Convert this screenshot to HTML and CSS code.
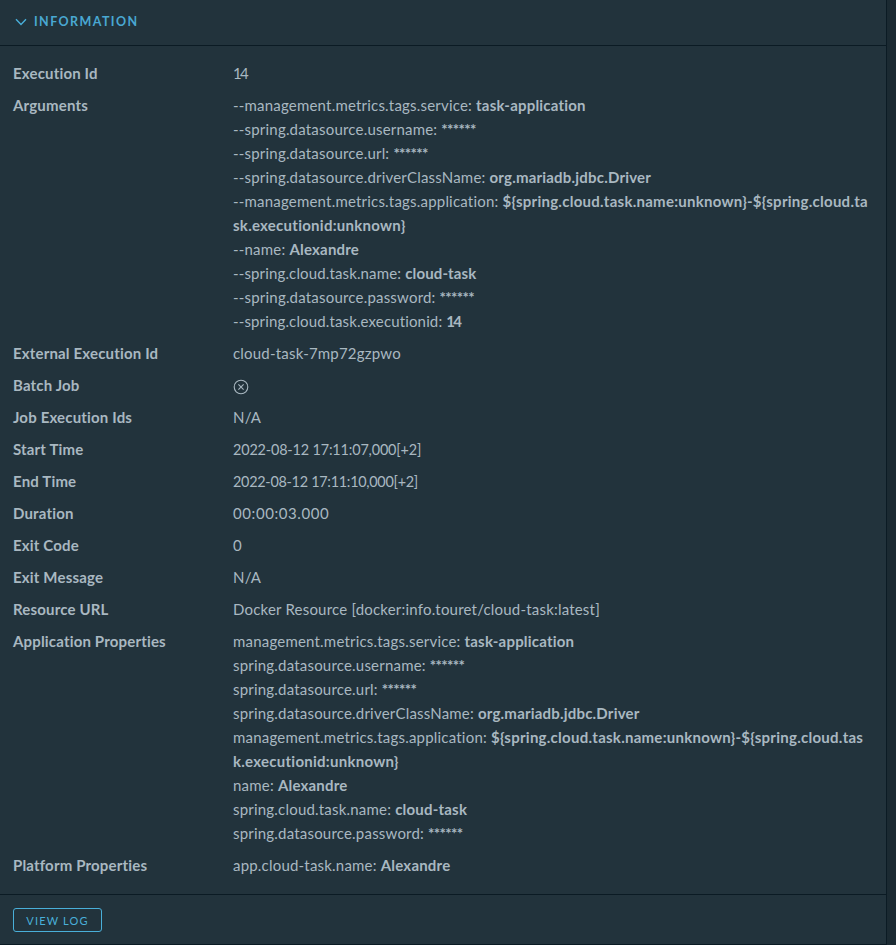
FILE: index.html
```html
<!DOCTYPE html>
<html lang="en">
<head>
<meta charset="utf-8">
<title>Task execution</title>
<link rel="stylesheet" href="styles.css">
</head>
<body>
<main class="card">
  <header class="card-header">
    <svg class="caret" viewBox="0 0 12 8" width="12" height="8"><path d="M1 1.2 6 6.4 11 1.2"/></svg>
    <h1>INFORMATION</h1>
  </header>
  <dl class="details">
    <dt>Execution Id</dt><dd class="count">14</dd>
    <dt>Arguments</dt>
    <dd>
      <div>--management.metrics.tags.service: <b>task-application</b></div>
      <div>--spring.datasource.username: <span class="mask">******</span></div>
      <div>--spring.datasource.url: <span class="mask">******</span></div>
      <div>--spring.datasource.driverClassName: <b>org.mariadb.jdbc.Driver</b></div>
      <div>--management.metrics.tags.application: <b class="long">${spring.cloud.task.name:unknown}-${spring.cloud.ta<br>sk.executionid:unknown}</b></div>
      <div>--name: <b>Alexandre</b></div>
      <div class="tight">--spring.cloud.task.name: <b>cloud-task</b></div>
      <div>--spring.datasource.password: <span class="mask">******</span></div>
      <div class="tight">--spring.cloud.task.executionid: <b class="count">14</b></div>
    </dd>
    <dt>External Execution Id</dt><dd>cloud-task-7mp72gzpwo</dd>
    <dt>Batch Job</dt>
    <dd class="status"><svg viewBox="0 0 16 16" width="16" height="16"><circle cx="8" cy="8" r="6.8"/><path d="m5.4 5.4 5.2 5.2m0-5.2-5.2 5.2"/></svg></dd>
    <dt>Job Execution Ids</dt><dd>N/A</dd>
    <dt>Start Time</dt><dd class="time">2022-08-12 17:11:07,000[+2]</dd>
    <dt>End Time</dt><dd class="time end">2022-08-12 17:11:10,000[+2]</dd>
    <dt>Duration</dt><dd class="duration">00:00:03.000</dd>
    <dt>Exit Code</dt><dd>0</dd>
    <dt>Exit Message</dt><dd>N/A</dd>
    <dt>Resource URL</dt><dd>Docker Resource [docker:info.touret/cloud-task:latest]</dd>
    <dt>Application Properties</dt>
    <dd>
      <div>management.metrics.tags.service: <b>task-application</b></div>
      <div>spring.datasource.username: <span class="mask">******</span></div>
      <div>spring.datasource.url: <span class="mask">******</span></div>
      <div>spring.datasource.driverClassName: <b>org.mariadb.jdbc.Driver</b></div>
      <div>management.metrics.tags.application: <b class="long">${spring.cloud.task.name:unknown}-${spring.cloud.tas<br>k.executionid:unknown}</b></div>
      <div>name: <b>Alexandre</b></div>
      <div>spring.cloud.task.name: <b>cloud-task</b></div>
      <div>spring.datasource.password: <span class="mask">******</span></div>
    </dd>
    <dt>Platform Properties</dt><dd>app.cloud-task.name: <b>Alexandre</b></dd>
  </dl>
  <footer class="card-footer"><button type="button">VIEW LOG</button></footer>
</main>
</body>
</html>
```
FILE: styles.css
```css
* { box-sizing: border-box; }
body {
  margin: 0;
  height: 945px;
  overflow: hidden;
  background: #1b2a32;
  color: #a9b8c1;
  font: 15px/24px Lato, "Liberation Sans", sans-serif;
}
.card {
  width: 887px;
  height: 945px;
  background: #22333c;
  border-right: 1px solid #0b1b24;
  border-bottom: 1px solid #0b1b24;
}
.card-header {
  display: flex;
  align-items: center;
  height: 46px;
  padding: 0 15px 2px;
  gap: 7px;
  border-bottom: 1px solid #0b1b24;
}
.caret { fill: none; stroke: #49afd9; stroke-width: 1.4; }
h1 {
  margin: 0;
  padding-top: 1px;
  color: #49a8d2;
  font-size: 12.5px;
  font-weight: 700;
  letter-spacing: 1.4px;
}
.details {
  display: grid;
  grid-template-columns: 220px 1fr;
  row-gap: 8px;
  height: 849px;
  margin: 0;
  padding: 15px 0 16px 13px;
  border-bottom: 1px solid #0b1b24;
  align-content: start;
  white-space: nowrap;
}
dt { font-weight: 700; letter-spacing: 0.17px; }
dd { margin: 0; letter-spacing: 0.2px; }
b { font-weight: 700; }
.long { letter-spacing: 0.26px; }
.tight { letter-spacing: 0.14px; }
.mask { font-weight: 700; letter-spacing: -0.65px; }
.count { letter-spacing: -1.8px; }
.time { height: 24px; padding-top: 1px; font-size: 14.4px; letter-spacing: -0.15px; }
.end { letter-spacing: -0.27px; }
.duration { letter-spacing: 0.58px; }
.status { display: flex; align-items: center; height: 24px; padding-top: 3px; }
.status svg { fill: none; stroke: #a9b8c1; stroke-width: 1.1; }
.card-footer { padding: 13px; }
button {
  display: block;
  width: 89px;
  height: 24px;
  padding: 1px 0 0;
  border: 1px solid #49afd9;
  border-radius: 3px;
  background: transparent;
  color: #49afd9;
  font: 11px/20px Lato, sans-serif;
  letter-spacing: 1.15px;
}
```
